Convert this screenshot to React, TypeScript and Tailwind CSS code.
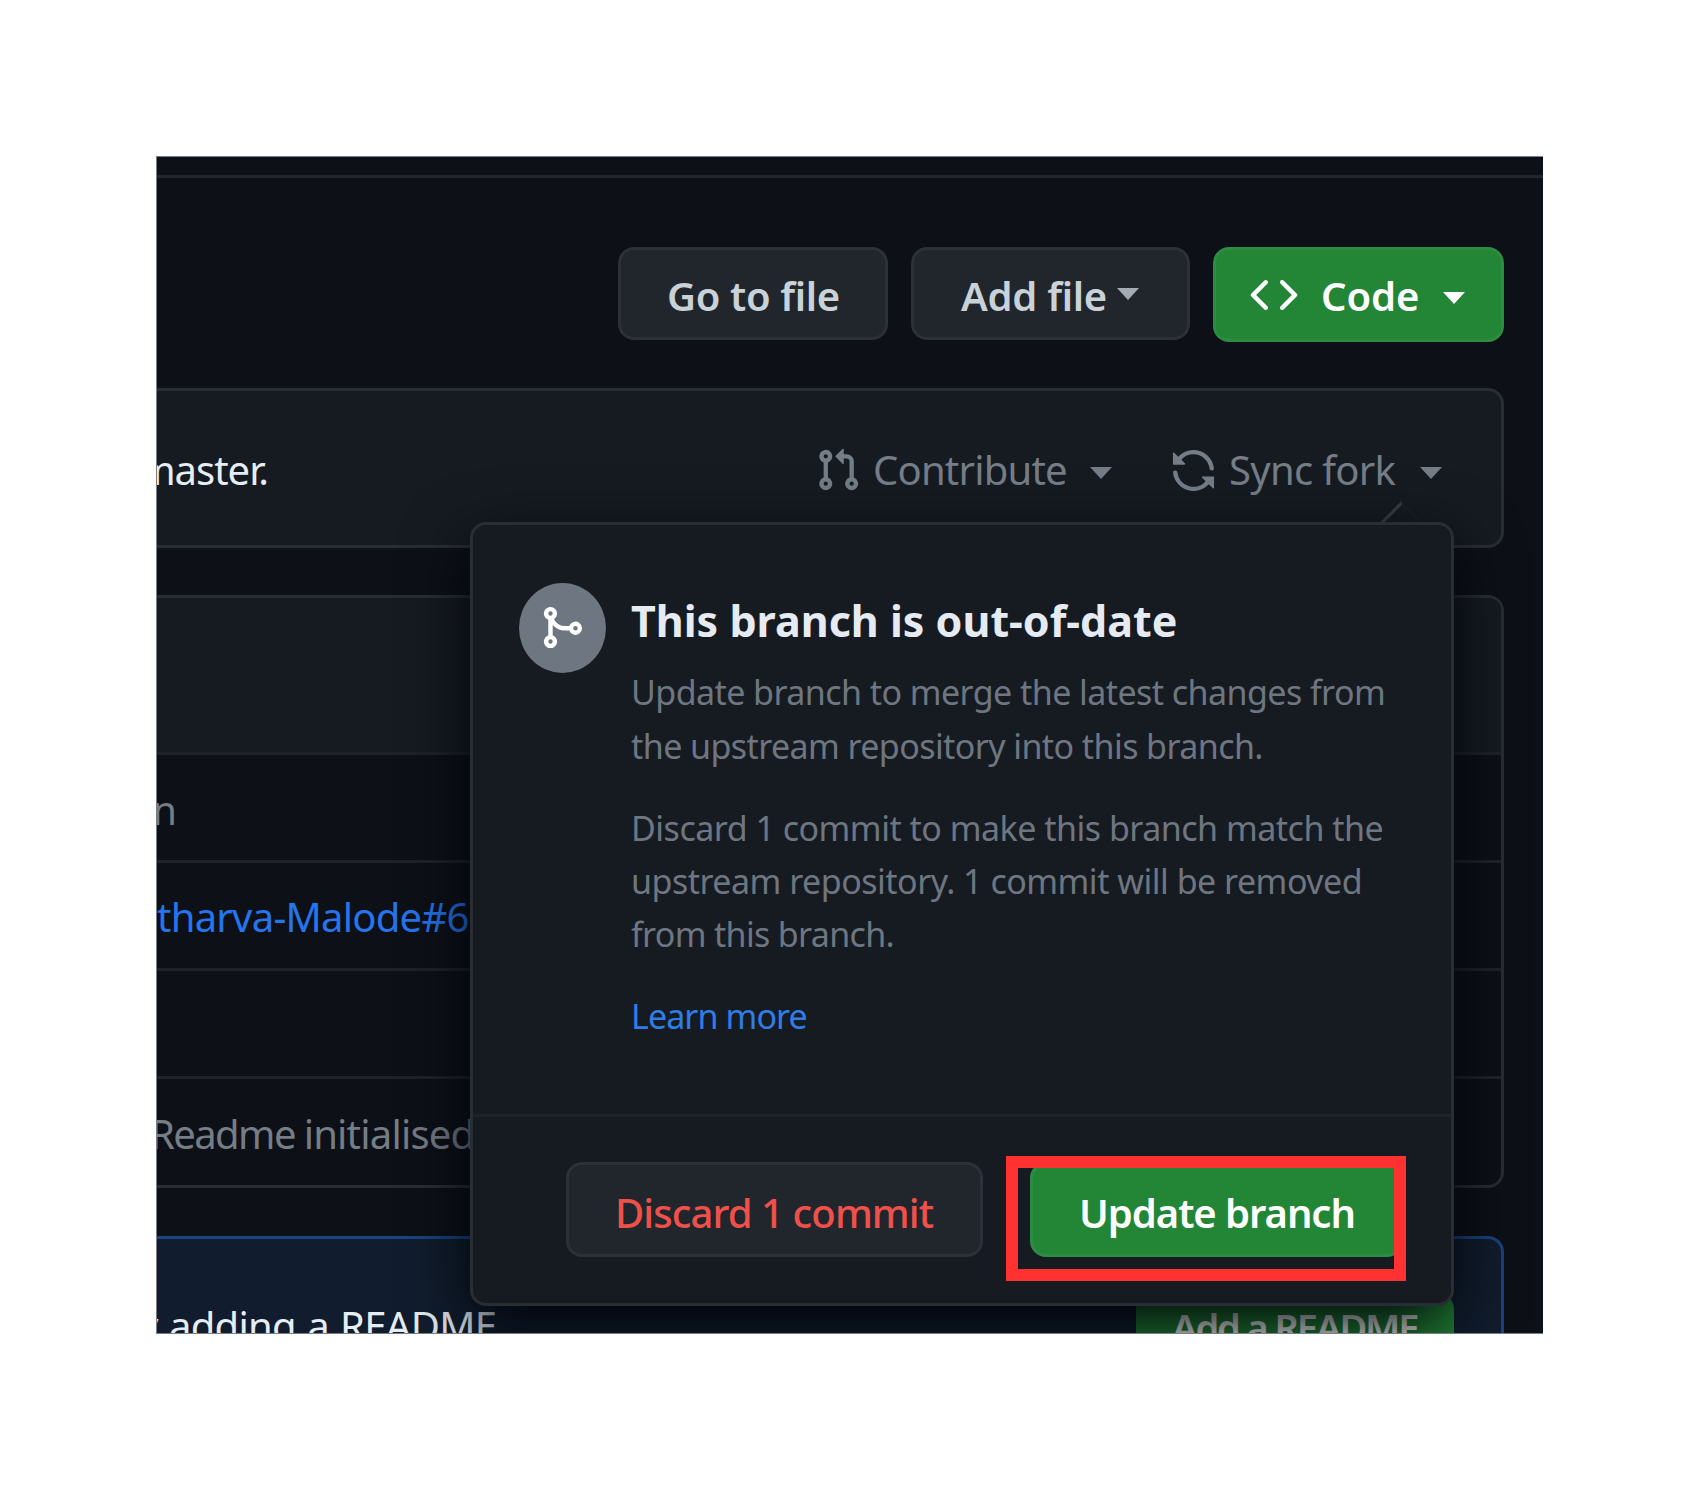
import React from "react";

type IconProps = { d: string; className?: string };

const PULL_REQUEST =
  "M1.5 3.25a2.25 2.25 0 1 1 3 2.122v5.256a2.251 2.251 0 1 1-1.5 0V5.372A2.25 2.25 0 0 1 1.5 3.25Zm5.677-.177L9.573.677A.25.25 0 0 1 10 .854V2.5h1A2.5 2.5 0 0 1 13.5 5v5.628a2.251 2.251 0 1 1-1.5 0V5a1 1 0 0 0-1-1h-1v1.646a.25.25 0 0 1-.427.177L7.177 3.427a.25.25 0 0 1 0-.354ZM3.75 2.5a.75.75 0 1 0 0 1.5.75.75 0 0 0 0-1.5Zm0 9.5a.75.75 0 1 0 0 1.5.75.75 0 0 0 0-1.5Zm8.25.75a.75.75 0 1 0 1.5 0 .75.75 0 0 0-1.5 0Z";
const SYNC =
  "M1.705 8.005a.75.75 0 0 1 .834.656 5.5 5.5 0 0 0 9.592 2.97l-1.204-1.204a.25.25 0 0 1 .177-.427h3.646a.25.25 0 0 1 .25.25v3.646a.25.25 0 0 1-.427.177l-1.38-1.38A7.002 7.002 0 0 1 1.05 8.84a.75.75 0 0 1 .656-.834ZM8 2.5a5.487 5.487 0 0 0-4.131 1.869l1.204 1.204A.25.25 0 0 1 4.896 6H1.25A.25.25 0 0 1 1 5.75V2.104a.25.25 0 0 1 .427-.177l1.38 1.38A7.002 7.002 0 0 1 14.95 7.16a.75.75 0 0 1-1.49.178A5.5 5.5 0 0 0 8 2.5Z";
const MERGE =
  "M5.45 5.154A4.25 4.25 0 0 0 9.25 7.5h1.378a2.251 2.251 0 1 1 0 1.5H9.25A5.734 5.734 0 0 1 5 7.123v3.505a2.25 2.25 0 1 1-1.5 0V5.372a2.25 2.25 0 1 1 1.95-.218ZM4.25 13.5a.75.75 0 1 0 0-1.5.75.75 0 0 0 0 1.5Zm8.5-4.5a.75.75 0 1 0 0-1.5.75.75 0 0 0 0 1.5ZM5 3.25a.75.75 0 1 0-1.5 0 .75.75 0 0 0 1.5 0Z";
const CODE =
  "m11.28 3.22 4.25 4.25a.75.75 0 0 1 0 1.06l-4.25 4.25a.749.749 0 0 1-1.275-.326.749.749 0 0 1 .215-.734L13.94 8l-3.72-3.72a.749.749 0 0 1 .326-1.275.749.749 0 0 1 .734.215Zm-6.56 0a.751.751 0 0 1 1.042.018.751.751 0 0 1 .018 1.042L2.06 8l3.72 3.72a.749.749 0 0 1-.326 1.275.749.749 0 0 1-.734-.215L.47 8.53a.75.75 0 0 1 0-1.06Z";

function Icon({ d, className }: IconProps) {
  return (
    <svg viewBox="0 0 16 16" fill="currentColor" className={`shrink-0 ${className ?? ""}`}>
      <path d={d} fillRule="evenodd" />
    </svg>
  );
}

function Caret({ className }: { className?: string }) {
  return (
    <svg viewBox="0 0 22 12" fill="currentColor" className={`h-[12px] w-[22px] shrink-0 ${className ?? ""}`}>
      <path d="M0 0h22L11 12z" />
    </svg>
  );
}

function Toolbar() {
  return (
    <div className="flex h-[210px] items-start justify-end gap-[23px] pt-[69px] pr-[39px] text-[40px] leading-[48px] font-semibold text-[#c9d1d9]">
      <button className="flex h-[93px] w-[270px] rounded-[16px] border-[3px] border-[#2c3138] bg-[#21262d] pt-[22px] pl-[46px] tracking-[-0.35px]">
        Go to file
      </button>
      <button className="flex h-[93px] w-[279px] rounded-[16px] border-[3px] border-[#2c3138] bg-[#21262d] pt-[22px] pl-[47px]">
        <span className="w-[156px] text-left tracking-[-0.3px]">Add file</span>
        <Caret className="mt-[16px] text-[#a5abb3]" />
      </button>
      <button className="flex h-[95px] w-[291px] rounded-[16px] border-[3px] border-[#2c8d42] bg-[#238636] pt-[22px] pl-[34px] text-white">
        <Icon d={CODE} className="-mt-px h-[48px] w-[48px]" />
        <span className="ml-[23px] w-[122px] text-left tracking-[-0.1px]">Code</span>
        <Caret className="mt-[20px]" />
      </button>
    </div>
  );
}

function SyncPopover() {
  return (
    <div className="absolute top-[131px] left-[313px] z-10 w-[984px]">
      <div className="absolute top-[-15px] left-[917px] h-[29px] w-[29px] rotate-45 border-t-[3px] border-l-[3px] border-t-[#1a1f25] border-l-[#3a4048] bg-[#161b22]" />
      <div className="relative h-[784px] rounded-[16px] border-[3px] border-[#292e35] bg-[#161b22] shadow-[0_22px_66px_#010409]">
        <div className="flex h-[589px] pt-[58px] pl-[46px]">
          <div className="flex h-[90px] w-[87px] shrink-0 items-center justify-center rounded-[50%] bg-[#6e7681] pr-[2px] pb-[2px] text-white">
            <Icon d={MERGE} className="h-[47px] w-[47px]" />
          </div>
          <div className="ml-[25px] text-[34px] leading-[53px] whitespace-nowrap text-[#6e7681]">
            <h2 className="mt-[8px] text-[43px] leading-[60px] font-bold tracking-[0px] text-[#e6ebf1]">
              This branch is out-of-date
            </h2>
            <p className="mt-[15px]">
              <span className="block tracking-[-0.56px]">Update branch to merge the latest changes from</span>
              <span className="mt-px block tracking-[-0.58px]">the upstream repository into this branch.</span>
            </p>
            <p className="mt-[29px]">
              <span className="block tracking-[-0.5px]">Discard 1 commit to make this branch match the</span>
              <span className="block tracking-[-0.5px]">upstream repository. 1 commit will be removed</span>
              <span className="block tracking-[-0.66px]">from this branch.</span>
            </p>
            <p className="mt-[29px] tracking-[-0.9px] text-[#2f7ee6]">Learn more</p>
          </div>
        </div>
        <div className="flex h-[189px] border-t-[3px] border-[#1e232a] pt-[45px] pl-[93px] text-[40px] leading-[48px]">
          <button className="flex h-[95px] w-[417px] shrink-0 rounded-[16px] border-[3px] border-[#2c3138] bg-[#21262d] pt-[24px] pl-[46px] font-medium tracking-[-0.9px] text-[#f0504a]">
            Discard 1 commit
          </button>
          <button className="ml-[47px] flex h-[95px] w-[373px] shrink-0 rounded-[16px] border-[3px] border-[#2c8d42] bg-[#238636] pt-[24px] pl-[46px] font-semibold tracking-[-1.05px] text-white">
            Update branch
          </button>
        </div>
        <div className="absolute top-[631px] left-[533px] h-[125px] w-[400px] border-[12px] border-[#ff3131]" />
      </div>
    </div>
  );
}

function SyncBar() {
  return (
    <div className="relative mr-[39px] h-[160px] rounded-r-[16px] border-y-[3px] border-r-[3px] border-[#292e35] bg-[#161b22]">
      <div className="flex pt-[55px] text-[40px] leading-[48px] whitespace-nowrap text-[#757d87]">
        <div className="flex w-[111px] shrink-0 justify-end tracking-[-1px] text-[#e6edf3]">
          <span>with master.</span>
        </div>
        <Icon d={PULL_REQUEST} className="mt-px ml-[547px] h-[46px] w-[46px]" />
        <span className="ml-[12px] w-[217px] shrink-0 tracking-[-0.8px]">Contribute</span>
        <Caret className="mt-[21px]" />
        <Icon d={SYNC} className="mt-px ml-[58px] h-[47px] w-[47px]" />
        <span className="ml-[12px] w-[191px] shrink-0 tracking-[-0.7px]">Sync fork</span>
        <Caret className="mt-[21px]" />
      </div>
      <SyncPopover />
    </div>
  );
}

function FileTable() {
  return (
    <div className="mt-[47px] mr-[39px] h-[593px] overflow-hidden rounded-r-[16px] border-y-[3px] border-r-[3px] border-[#292e35] text-[40px] leading-[48px] whitespace-nowrap text-[#757d87]">
      <div className="h-[154px] bg-[#161b22]" />
      <div className="flex h-[108px] border-t-[3px] border-[#1e232a] pt-[31px]">
        <span className="flex w-[19px] justify-end tracking-[-1px]">Initial version</span>
      </div>
      <div className="h-[108px] border-t-[3px] border-[#1e232a] pt-[30px]">
        <span className="tracking-[-0.75px] text-[#2575ee]">tharva-Malode#6</span>
      </div>
      <div className="h-[108px] border-t-[3px] border-[#1e232a]" />
      <div className="h-[109px] border-t-[3px] border-[#1e232a] pt-[31px]">
        <span className="-ml-[7px] tracking-[-1.6px]">
          Readme <span className="tracking-[-0.8px]">initialised</span>
        </span>
      </div>
    </div>
  );
}

function ReadmeBanner() {
  return (
    <div className="mt-[48px] mr-[39px] flex h-[160px] items-start justify-between rounded-tr-[16px] border-t-[3px] border-r-[3px] border-[#1a4580] bg-[#111d2e] pr-[47px] text-[40px] leading-[48px] whitespace-nowrap text-[#e6edf3]">
      <span className="mt-[63px] -ml-[19px] tracking-[-0.7px] [word-spacing:1.5px]">y adding a README</span>
      <button className="mt-[54px] flex h-[90px] w-[318px] rounded-[16px] bg-[#238636] pt-[10px] pl-[36px] text-[38px] font-semibold tracking-[-2.1px] text-white">
        Add a README
      </button>
    </div>
  );
}

export default function App() {
  return (
    <div className="h-[1490px] w-[1703px] overflow-hidden bg-white pt-[156px] pl-[156px] font-['Noto_Sans','Open_Sans',sans-serif]">
      <main className="h-[1178px] w-[1387px] overflow-hidden border-y border-l border-[#7b7e83] bg-[#0d1117]">
        <div className="h-[21px] border-b-[3px] border-[#22272e]" />
        <Toolbar />
        <SyncBar />
        <FileTable />
        <ReadmeBanner />
      </main>
    </div>
  );
}
